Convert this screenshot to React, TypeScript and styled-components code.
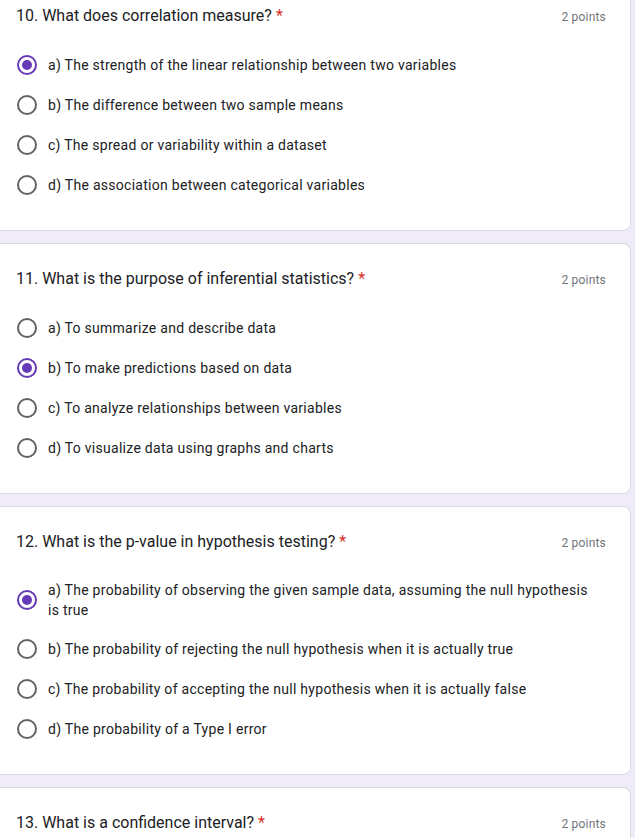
import React from "react";
import styled, { createGlobalStyle } from "styled-components";

const GlobalStyle = createGlobalStyle`
  html, body {
    margin: 0;
    padding: 0;
    background: #f0ebf8;
    font-family: Roboto, "Liberation Sans", Arial, sans-serif;
    color: #202124;
  }
  * { box-sizing: border-box; }
`;

const Page = styled.div`
  display: flex;
  flex-direction: column;
  gap: 12px;
  padding: 0 4px 0 0;
  background: #f0ebf8;
`;

const Card = styled.section<{ $cutTop?: boolean }>`
  background: #ffffff;
  border: 1px solid #dadce0;
  border-left: 0;
  border-top: ${(p) => (p.$cutTop ? "0" : "1px solid #dadce0")};
  border-radius: ${(p) => (p.$cutTop ? "0 0 8px 0" : "0 8px 8px 0")};
  padding: ${(p) => (p.$cutTop ? "4px" : "23px")} 24px 25px 16px;
  display: flex;
  flex-direction: column;
`;

const TitleRow = styled.div`
  display: flex;
  align-items: center;
  justify-content: space-between;
  min-height: 24px;
`;

const Title = styled.div`
  font-size: 16px;
  line-height: 24px;
  letter-spacing: 0;
  color: #202124;
`;

const Required = styled.span`
  color: #d93025;
  margin-left: 4px;
`;

const Points = styled.div`
  font-size: 12px;
  line-height: 16px;
  color: #70757a;
  letter-spacing: 0.2px;
  margin-top: 2px;
`;

const Options = styled.div`
  display: flex;
  flex-direction: column;
  margin: 17px 12px 0 0;
`;

const OptionRow = styled.label`
  display: flex;
  align-items: center;
  padding: 8px 0;
  min-height: 40px;
`;

const RadioWrap = styled.span`
  flex: 0 0 22px;
  height: 24px;
  display: flex;
  align-items: center;
  justify-content: center;
  margin-right: 10px;
`;

const Radio = styled.span<{ $checked?: boolean }>`
  width: 20px;
  height: 20px;
  border-radius: 50%;
  border: 2px solid ${(p) => (p.$checked ? "#673ab7" : "#5f6368")};
  display: flex;
  align-items: center;
  justify-content: center;
  &::after {
    content: "";
    display: ${(p) => (p.$checked ? "block" : "none")};
    width: 10px;
    height: 10px;
    border-radius: 50%;
    background: #673ab7;
  }
`;

const OptionText = styled.span`
  font-size: 14px;
  line-height: 20px;
  padding: 1px 0;
  letter-spacing: 0.28px;
  color: #202124;
  flex: 1;
`;

type Q = {
  title: string;
  options: string[];
  checked: number;
};

const questions: Q[] = [
  {
    title: "10. What does correlation measure?",
    options: [
      "a) The strength of the linear relationship between two variables",
      "b) The difference between two sample means",
      "c) The spread or variability within a dataset",
      "d) The association between categorical variables",
    ],
    checked: 0,
  },
  {
    title: "11. What is the purpose of inferential statistics?",
    options: [
      "a) To summarize and describe data",
      "b) To make predictions based on data",
      "c) To analyze relationships between variables",
      "d) To visualize data using graphs and charts",
    ],
    checked: 1,
  },
  {
    title: "12. What is the p-value in hypothesis testing?",
    options: [
      "a) The probability of observing the given sample data, assuming the null hypothesis is true",
      "b) The probability of rejecting the null hypothesis when it is actually true",
      "c) The probability of accepting the null hypothesis when it is actually false",
      "d) The probability of a Type I error",
    ],
    checked: 0,
  },
];

export default function App() {
  return (
    <>
      <GlobalStyle />
      <Page>
        {questions.map((q, i) => (
          <Card key={q.title} $cutTop={i === 0}>
            <TitleRow>
              <Title>
                {q.title}
                <Required>*</Required>
              </Title>
              <Points>2 points</Points>
            </TitleRow>
            <Options>
              {q.options.map((o, j) => (
                <OptionRow key={o}>
                  <RadioWrap>
                    <Radio $checked={j === q.checked} />
                  </RadioWrap>
                  <OptionText>{o}</OptionText>
                </OptionRow>
              ))}
            </Options>
          </Card>
        ))}
        <Card>
          <TitleRow>
            <Title>
              13. What is a confidence interval?
              <Required>*</Required>
            </Title>
            <Points>2 points</Points>
          </TitleRow>
          <Options>
            <OptionRow>
              <RadioWrap>
                <Radio />
              </RadioWrap>
              <OptionText>&nbsp;</OptionText>
            </OptionRow>
          </Options>
        </Card>
      </Page>
    </>
  );
}
